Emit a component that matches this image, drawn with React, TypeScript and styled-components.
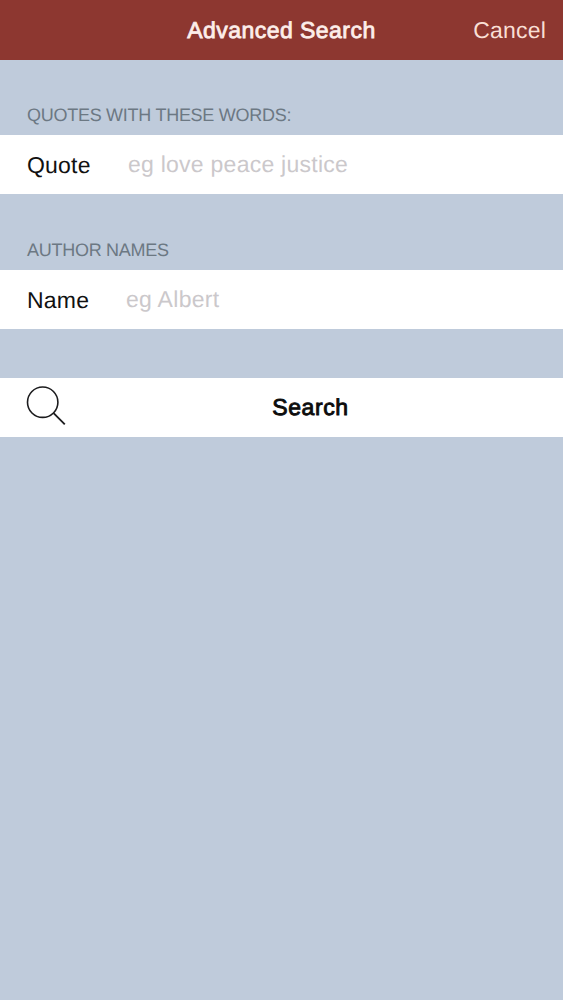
import { useState } from "react";
import styled, { createGlobalStyle } from "styled-components";

const GlobalStyle = createGlobalStyle`
  body {
    margin: 0;
    background: #bfcbdb;
    font-family: "Liberation Sans", Arial, sans-serif;
  }

  body, button, input {
    text-rendering: geometricPrecision;
  }
`;

const Page = styled.div`
  display: flex;
  flex-direction: column;
  min-height: 100vh;
  background: #bfcbdb;
`;

const Header = styled.header`
  display: grid;
  grid-template-columns: 1fr auto 1fr;
  align-items: center;
  height: 60px;
  padding: 0 17px;
  box-sizing: border-box;
  background: #8d3730;
`;

/* Regular weight with a thin stroke reads as a medium weight */
const Title = styled.h1`
  grid-column: 2;
  margin: 0;
  font-size: 23px;
  font-weight: normal;
  line-height: 26px;
  letter-spacing: 0.45px;
  color: #fdeeea;
  -webkit-text-stroke: 0.8px #fdeeea;
`;

const CancelButton = styled.button`
  justify-self: end;
  padding: 0;
  border: 0;
  background: none;
  font-family: inherit;
  font-size: 23px;
  line-height: 26px;
  letter-spacing: 0.2px;
  color: #f9dfd5;
`;

const SectionTitle = styled.h2<{ $height: number }>`
  height: ${(props) => props.$height}px;
  margin: 0;
  padding: 0 27px 8px;
  box-sizing: border-box;
  display: flex;
  align-items: flex-end;
  font-size: 18px;
  font-weight: normal;
  line-height: 24px;
  letter-spacing: -0.27px;
  color: #6c7883;
`;

const Row = styled.label`
  display: flex;
  align-items: center;
  height: 59px;
  padding: 0 27px;
  background: #fff;
`;

const Label = styled.span<{ $width: number }>`
  width: ${(props) => props.$width}px;
  font-size: 23px;
  line-height: 26px;
  letter-spacing: 0.2px;
  color: #111;
`;

const Input = styled.input<{ $spacing: number }>`
  flex: 1;
  min-width: 0;
  height: 30px;
  padding: 0;
  border: 0;
  outline: none;
  background: none;
  font-family: inherit;
  font-size: 23px;
  letter-spacing: ${(props) => props.$spacing}px;
  color: #111;

  &::placeholder {
    color: #cbc8cb;
    opacity: 1;
  }
`;

const SearchButton = styled.button`
  display: flex;
  align-items: center;
  height: 59px;
  margin-top: 48.5px;
  padding: 0 27px 0 26px;
  border: 0;
  background: #fff;
  font-family: inherit;
  font-size: 23px;
  letter-spacing: 0.6px;
  color: #0c0c0c;
  -webkit-text-stroke: 0.9px #0c0c0c;
`;

const SearchText = styled.span`
  flex: 1;
  padding: 1px 0 0 18px;
  text-align: center;
`;

const Icon = styled.svg`
  overflow: visible;
`;

const SearchIcon = () => (
  <Icon width="41" height="41" viewBox="0 0 41 41" fill="none" stroke="#1c1c1e">
    <circle cx="16.7" cy="15.2" r="15.2" strokeWidth="1.6" />
    <path d="M27.6 26.2L38.8 37.4" strokeWidth="1.8" />
  </Icon>
);

const App = () => {
  const [quote, setQuote] = useState("");
  const [name, setName] = useState("");

  return (
    <Page>
      <GlobalStyle />
      <Header>
        <Title>Advanced Search</Title>
        <CancelButton>Cancel</CancelButton>
      </Header>
      <SectionTitle $height={75}>QUOTES WITH THESE WORDS:</SectionTitle>
      <Row>
        <Label $width={101}>Quote</Label>
        <Input
          $spacing={0.25}
          placeholder="eg love peace justice"
          value={quote}
          onChange={(e) => setQuote(e.target.value)}
        />
      </Row>
      <SectionTitle $height={76}>AUTHOR NAMES</SectionTitle>
      <Row>
        <Label $width={99}>Name</Label>
        <Input
          $spacing={0.3}
          placeholder="eg Albert"
          value={name}
          onChange={(e) => setName(e.target.value)}
        />
      </Row>
      <SearchButton>
        <SearchIcon />
        <SearchText>Search</SearchText>
      </SearchButton>
    </Page>
  );
};

export default App;
